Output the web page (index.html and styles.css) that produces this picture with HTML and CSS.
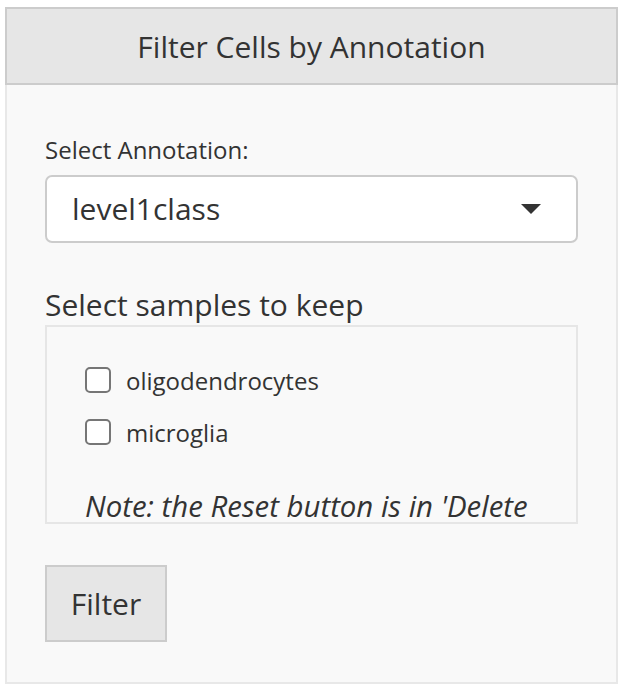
FILE: index.html
```html
<!DOCTYPE html>
<html>
<head>
<meta charset="utf-8">
<link rel="stylesheet" href="styles.css">
</head>
<body>
<div class="card">
  <div class="card-header">Filter Cells by Annotation</div>
  <div class="card-body">
    <label class="field-label">Select Annotation:</label>
    <div class="select">
      <span class="select-value">level1class</span>
      <span class="caret"></span>
    </div>
    <div class="section-title">Select samples to keep</div>
    <div class="samples">
      <label class="check-row"><span class="checkbox"></span><span>oligodendrocytes</span></label>
      <label class="check-row"><span class="checkbox"></span><span>microglia</span></label>
      <p class="note">Note: the Reset button is in 'Delete Cells' tab.</p>
    </div>
    <button class="btn">Filter</button>
  </div>
</div>
</body>
</html>
```

FILE: styles.css
```css
html, body {
  margin: 0;
  padding: 0;
  background: #ffffff;
}
body {
  font-family: "Open Sans", "Noto Sans", sans-serif;
  color: #333333;
}
.card {
  margin: 7px 9px 0 5px;
  width: 613px;
}
.card-header {
  box-sizing: border-box;
  height: 78px;
  border: 2px solid #cccccc;
  background: #e6e6e6;
  display: flex;
  align-items: center;
  justify-content: center;
  font-size: 30px;
  color: #333;
}
.card-body {
  box-sizing: border-box;
  height: 599px;
  border: 2px solid #e8e8e8;
  border-top: none;
  background: #f9f9f9;
  padding: 49px 38px 0 38px;
  display: flex;
  flex-direction: column;
  align-items: flex-start;
}
.field-label {
  font-size: 24px;
  line-height: 32px;
  margin-bottom: 9px;
}
.select {
  box-sizing: border-box;
  width: 533px;
  height: 68px;
  background: #ffffff;
  border: 2px solid #cccccc;
  border-radius: 7px;
  display: flex;
  align-items: center;
  justify-content: space-between;
  padding: 0 35px 0 25px;
}
.select-value {
  font-size: 30px;
  line-height: 40px;
  color: #333;
}
.caret {
  width: 0;
  height: 0;
  border-left: 10px solid transparent;
  border-right: 10px solid transparent;
  border-top: 10px solid #333;
}
.section-title {
  font-size: 30px;
  line-height: 40px;
  margin-top: 42px;
}
.samples {
  box-sizing: border-box;
  width: 533px;
  height: 199px;
  border: 2px solid #e6e6e6;
  overflow: hidden;
  padding: 37px 38px 0 38px;
  display: flex;
  flex-direction: column;
}
.check-row {
  display: flex;
  align-items: center;
  height: 32px;
  font-size: 24px;
  margin-bottom: 20px;
}
.check-row:last-of-type {
  margin-bottom: 0;
}
.checkbox {
  box-sizing: border-box;
  width: 26px;
  height: 26px;
  border: 2px solid #767676;
  border-radius: 5px;
  background: #ffffff;
  margin-right: 15px;
  flex: none;
}
.note {
  margin: 38px 0 0 0;
  font-size: 29.4px;
  line-height: 40px;
  font-style: italic;
}
.btn {
  margin-top: 41px;
  box-sizing: border-box;
  width: 122px;
  height: 77px;
  background: #e6e6e6;
  border: 2px solid #cccccc;
  border-radius: 0;
  font-family: "Open Sans", "Noto Sans", sans-serif;
  font-size: 30px;
  color: #333;
  padding: 0;
}
```
